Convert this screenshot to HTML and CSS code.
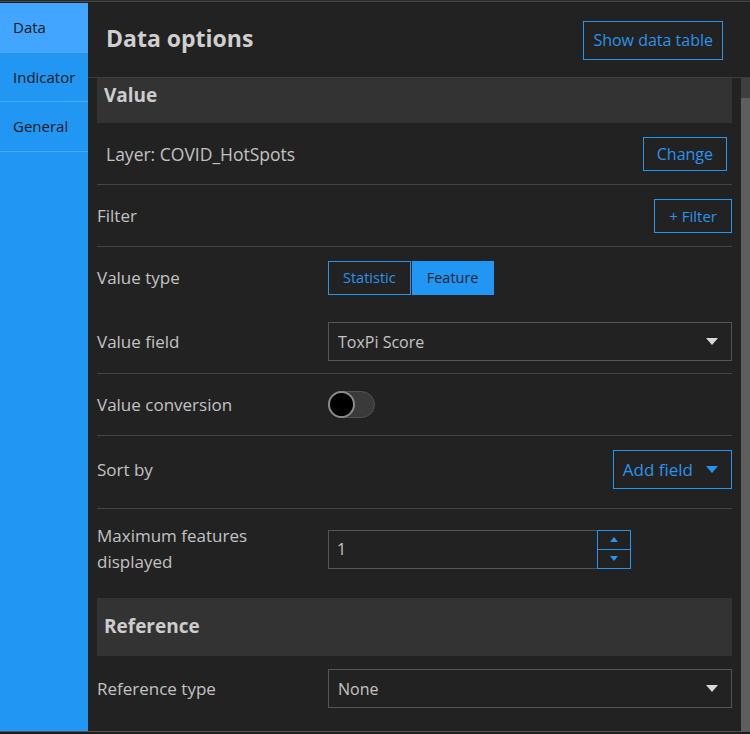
FILE: index.html
```html
<!DOCTYPE html>
<html lang="en">
<head>
<meta charset="utf-8">
<title>Data options</title>
<link rel="stylesheet" href="styles.css">
</head>
<body>
<div class="app">
  <nav class="tabs">
    <div class="tab active">Data</div>
    <div class="tab">Indicator</div>
    <div class="tab">General</div>
  </nav>
  <main class="panel">
    <header class="panel-head">
      <h1>Data options</h1>
      <button class="btn btn-lg">Show data table</button>
    </header>
    <div class="scroll">
      <div class="content">
        <div class="section sec-value">Value</div>
        <div class="row row-layer">
          <span class="label label-layer">Layer: COVID_HotSpots</span>
          <button class="btn btn-change">Change</button>
        </div>
        <div class="row row-split">
          <span class="label">Filter</span>
          <button class="btn">+ Filter</button>
        </div>
        <div class="row row-grid row-type">
          <span class="label">Value type</span>
          <div class="seg">
            <button class="seg-btn">Statistic</button>
            <button class="seg-btn on">Feature</button>
          </div>
        </div>
        <div class="row row-grid row-field">
          <span class="label">Value field</span>
          <div class="select">ToxPi Score<span class="caret"></span></div>
        </div>
        <div class="row row-grid row-conv">
          <span class="label">Value conversion</span>
          <div class="toggle"><span class="knob"></span></div>
        </div>
        <div class="row row-split row-sort">
          <span class="label">Sort by</span>
          <button class="btn btn-add">Add field<span class="caret blue"></span></button>
        </div>
        <div class="row row-grid row-max">
          <span class="label">Maximum features<br>displayed</span>
          <div class="number">
            <span class="num-val">1</span>
            <div class="spin">
              <span class="spin-half"><span class="tri up"></span></span>
              <span class="spin-half"><span class="tri down"></span></span>
            </div>
          </div>
        </div>
        <div class="section sec-ref">Reference</div>
        <div class="row row-grid row-reftype">
          <span class="label">Reference type</span>
          <div class="select">None<span class="caret"></span></div>
        </div>
      </div>
      <div class="scrollbar"><div class="thumb"></div></div>
    </div>
  </main>
</div>
</body>
</html>
```

FILE: styles.css
```css
* { box-sizing: border-box; }
html, body { margin: 0; padding: 0; background: #1c1c1c; }
body {
  font-family: "Open Sans", "Lato", sans-serif;
  color: #c4c4c4;
  width: 750px;
  height: 734px;
  overflow: hidden;
}
.app {
  display: flex;
  height: 734px;
  border-top: 1px solid #2a2a2a;
  box-shadow: inset 0 1px 0 #4a4a4a;
  padding-top: 2px;
  padding-bottom: 3px;
  background: #1e1e1e;
  position: relative;
}
.app::after {
  content: "";
  position: absolute;
  left: 0; right: 0; bottom: 2px;
  height: 1px;
  background: #555;
}
.tabs {
  width: 88px;
  flex: none;
  background: #2196f3;
  display: flex;
  flex-direction: column;
}
.tab {
  height: 49.5px;
  padding-left: 13px;
  display: flex;
  align-items: center;
  font-size: 15px;
  color: #151a20;
  border-bottom: 1px solid #4aa9f5;
}
.tab.active { background: #42a5ff; }
.panel {
  flex: 1;
  display: flex;
  flex-direction: column;
  background: #222;
  min-width: 0;
}
.panel-head {
  height: 75px;
  flex: none;
  display: flex;
  align-items: center;
  justify-content: space-between;
  padding: 0 27px 0 18px;
  border-bottom: 1px solid #3c3c3c;
}
.panel-head h1 {
  margin: 0;
  font-size: 23px;
  font-weight: 700;
  color: #cfcfcf;
  padding-bottom: 4px;
}
.btn {
  font-family: inherit;
  background: transparent;
  border: 1px solid #2196f3;
  color: #2b93ec;
  font-size: 15px;
  height: 34px;
  padding: 0 14px;
  display: inline-flex;
  align-items: center;
  cursor: pointer;
}
.btn-change { font-size: 16px; padding: 0 13px; }
.btn-lg { height: 39px; font-size: 16px; padding: 0 9px; }
.scroll {
  flex: 1;
  display: flex;
  min-height: 0;
}
.content {
  flex: 1;
  padding: 0 9px;
  display: flex;
  flex-direction: column;
}
.scrollbar {
  width: 9px;
  flex: none;
  background: #3f3f3f;
  padding-top: 20px;
}
.thumb { background: #5e5e5e; height: 100%; }
.section {
  background: #333;
  color: #cdcdcd;
  font-weight: 700;
  font-size: 19px;
  padding: 0 7px;
  display: flex;
  align-items: center;
}
.sec-value { height: 45px; padding-bottom: 11px; }
.sec-ref { height: 58px; margin-top: 9px; padding-bottom: 2px; }
.row {
  display: flex;
  align-items: center;
  border-bottom: 1px solid #444;
  font-size: 17px;
}
.label { color: #c2c2c2; }
.label-layer { font-size: 17.5px; }
.row-layer {
  height: 62px;
  padding: 0 5px 0 9px;
  justify-content: space-between;
}
.row-split {
  height: 62px;
  justify-content: space-between;
}
.row-grid {
  display: grid;
  grid-template-columns: 231px 1fr;
  align-items: center;
}
.row-type { height: 61px; border-bottom: 0; }
.row-field { height: 66px; padding-top: 2px; }
.row-conv { height: 62px; }
.seg { display: flex; gap: 1px; }
.seg-btn {
  font-family: inherit;
  font-size: 14.5px;
  height: 34px;
  padding: 0 14px;
  border: 1px solid #2196f3;
  background: transparent;
  color: #2b93ec;
}
.seg-btn.on { background: #2196f3; color: #1d2530; }
.select {
  height: 39px;
  border: 1px solid #555;
  display: flex;
  align-items: center;
  justify-content: space-between;
  padding: 0 13px 0 9px;
  color: #c4c4c4;
  font-size: 16px;
}
.caret {
  width: 0; height: 0;
  border-left: 6.5px solid transparent;
  border-right: 6.5px solid transparent;
  border-top: 7px solid #d8d8d8;
}
.caret.blue { border-top-color: #2196f3; margin-left: 13px; }
.toggle {
  width: 47px;
  height: 27px;
  border-radius: 14px;
  background: #3a3a3a;
  border: 1px solid #505050;
  position: relative;
}
.knob {
  position: absolute;
  left: -1px; top: -1px;
  width: 27px; height: 27px;
  border-radius: 50%;
  background: #000;
  border: 2px solid #8a8a8a;
}
.row-sort { height: 73px; padding-bottom: 6px; }
.btn-add { height: 39px; font-size: 17px; padding: 0 13px 0 9px; }
.row-max { height: 80px; border-bottom: 0; }
.row-max .label { line-height: 26px; }
.number {
  width: 303px;
  height: 39px;
  display: flex;
}
.num-val {
  flex: 1;
  border: 1px solid #555;
  border-right: 0;
  display: flex;
  align-items: center;
  padding-left: 8px;
  font-size: 16px;
  color: #c4c4c4;
}
.spin {
  width: 34px;
  border: 1px solid #2196f3;
  display: flex;
  flex-direction: column;
}
.spin-half {
  flex: 1;
  display: flex;
  align-items: center;
  justify-content: center;
}
.spin-half + .spin-half { border-top: 1px solid #2196f3; }
.tri { width: 0; height: 0; border-left: 4px solid transparent; border-right: 4px solid transparent; }
.tri.up { border-bottom: 5px solid #2196f3; }
.tri.down { border-top: 5px solid #2196f3; }
.row-reftype { height: 66px; border-bottom: 0; padding-bottom: 1px; }
```
